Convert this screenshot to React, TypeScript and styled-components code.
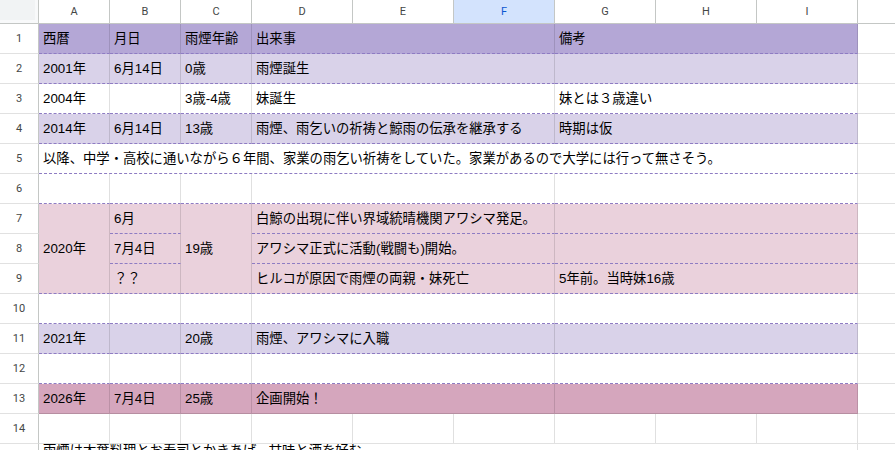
import styled, { createGlobalStyle } from 'styled-components';

const GlobalStyle = createGlobalStyle`
  html, body {
    margin: 0;
    padding: 0;
    background: #fff;
    overflow: hidden;
  }
  body {
    font-family: "Liberation Sans", "Noto Sans CJK JP", sans-serif;
  }
`;

type Line = 'dashed' | 'solid' | 'grid' | 'none';

const FILL = {
  head: '#b4a7d6',
  lilac: '#d9d2e9',
  pink: '#ead1dc',
  rose: '#d5a6bd',
  white: '#ffffff',
};

const Sheet = styled.div`
  display: grid;
  grid-template-columns: 39px 71px 71px 71px repeat(6, 101px) 120px;
  grid-template-rows: 24px repeat(14, 30px) 21px;
  width: 895px;
  height: 450px;
  overflow: hidden;
`;

const Corner = styled.div`
  background: #f1f3f4;
  border-right: 1px solid #c4c7c5;
  border-bottom: 1px solid #c4c7c5;
  box-shadow: inset -3px -3px 0 #f8f9fa;
`;

const ColHeader = styled.div<{ $selected?: boolean }>`
  display: flex;
  align-items: center;
  justify-content: center;
  background: ${(p) => (p.$selected ? '#d3e3fd' : '#ffffff')};
  color: ${(p) => (p.$selected ? '#0b57d0' : '#444746')};
  font-family: Roboto, "Liberation Sans", sans-serif;
  font-size: 11px;
  border-right: 1px solid #c4c7c5;
  border-bottom: 1px solid #c4c7c5;
  box-sizing: border-box;
`;

const RowHeader = styled.div<{ $row: number }>`
  grid-column: 1;
  grid-row: ${(p) => p.$row};
  display: flex;
  align-items: center;
  justify-content: center;
  background: #fff;
  color: #444746;
  font-family: Roboto, "Liberation Sans", sans-serif;
  font-size: 11px;
  border-right: 1px solid #c4c7c5;
  border-bottom: 1px solid #e1e1e1;
  box-sizing: border-box;
`;

const lineStyle = (line: Line) => {
  if (line === 'dashed') return '1px dashed #8e7cc3';
  if (line === 'solid') return '1px solid rgba(0, 0, 0, 0.14)';
  if (line === 'grid') return '1px solid #e1e1e1';
  return '0';
};

const Cell = styled.div<{
  $col: number;
  $span?: number;
  $row: number;
  $rows?: number;
  $fill: string;
  $bottom: Line;
  $top?: boolean;
}>`
  grid-column: ${(p) => p.$col} / span ${(p) => p.$span ?? 1};
  grid-row: ${(p) => p.$row} / span ${(p) => p.$rows ?? 1};
  display: flex;
  align-items: ${(p) => (p.$top ? 'flex-start' : 'center')};
  padding: 0 4px;
  background: ${(p) => p.$fill};
  color: #000;
  font-size: 13.33px;
  line-height: ${(p) => (p.$top ? '14px' : '17px')};
  white-space: nowrap;
  overflow: hidden;
  box-sizing: border-box;
  border-right: 1px solid rgba(0, 0, 0, 0.12);
  border-bottom: ${(p) => lineStyle(p.$bottom)};
`;

type CellDef = { c: number; span?: number; rows?: number; text?: string };
type RowDef = { fill: string; bottom: Line; cells: CellDef[]; top?: boolean };

const frame = (texts: string[]): CellDef[] => [
  { c: 1, text: texts[0] },
  { c: 2, text: texts[1] },
  { c: 3, text: texts[2] },
  { c: 4, span: 3, text: texts[3] },
  { c: 7, span: 3, text: texts[4] },
];

const ROWS: RowDef[] = [
  { fill: FILL.head, bottom: 'dashed', cells: frame(['西暦', '月日', '雨煙年齢', '出来事', '備考']) },
  { fill: FILL.lilac, bottom: 'dashed', cells: frame(['2001年', '6月14日', '0歳', '雨煙誕生', '']) },
  { fill: FILL.white, bottom: 'dashed', cells: frame(['2004年', '', '3歳-4歳', '妹誕生', '妹とは３歳違い']) },
  {
    fill: FILL.lilac,
    bottom: 'dashed',
    cells: frame(['2014年', '6月14日', '13歳', '雨煙、雨乞いの祈祷と鯨雨の伝承を継承する', '時期は仮']),
  },
  {
    fill: FILL.white,
    bottom: 'dashed',
    cells: [
      {
        c: 1,
        span: 9,
        text: '以降、中学・高校に通いながら６年間、家業の雨乞い祈祷をしていた。家業があるので大学には行って無さそう。',
      },
    ],
  },
  { fill: FILL.white, bottom: 'dashed', cells: frame(['', '', '', '', '']) },
  {
    fill: FILL.pink,
    bottom: 'dashed',
    cells: [
      { c: 1, rows: 3, text: '2020年' },
      { c: 2, text: '6月' },
      { c: 3, rows: 3, text: '19歳' },
      { c: 4, span: 3, text: '白鯨の出現に伴い界域統晴機関アワシマ発足。' },
      { c: 7, span: 3, text: '' },
    ],
  },
  {
    fill: FILL.pink,
    bottom: 'dashed',
    cells: [
      { c: 2, text: '7月4日' },
      { c: 4, span: 3, text: 'アワシマ正式に活動(戦闘も)開始。' },
      { c: 7, span: 3, text: '' },
    ],
  },
  {
    fill: FILL.pink,
    bottom: 'dashed',
    cells: [
      { c: 2, text: '？？' },
      { c: 4, span: 3, text: 'ヒルコが原因で雨煙の両親・妹死亡' },
      { c: 7, span: 3, text: '5年前。当時妹16歳' },
    ],
  },
  { fill: FILL.white, bottom: 'dashed', cells: frame(['', '', '', '', '']) },
  { fill: FILL.lilac, bottom: 'dashed', cells: frame(['2021年', '', '20歳', '雨煙、アワシマに入職', '']) },
  { fill: FILL.white, bottom: 'dashed', cells: frame(['', '', '', '', '']) },
  { fill: FILL.rose, bottom: 'solid', cells: frame(['2026年', '7月4日', '25歳', '企画開始！', '']) },
  {
    fill: FILL.white,
    bottom: 'grid',
    cells: [1, 2, 3, 4, 5, 6, 7, 8, 9].map((c) => ({ c })),
  },
  {
    fill: FILL.white,
    bottom: 'none',
    top: true,
    cells: [{ c: 1, span: 9, text: '雨煙は大葉料理とお寿司とかきあげ、甘味と酒を好む' }],
  },
];

const LETTERS = ['A', 'B', 'C', 'D', 'E', 'F', 'G', 'H', 'I', ''];

function RowGroup({ row, index }: { row: RowDef; index: number }) {
  const gridRow = index + 2;
  return (
    <>
      <RowHeader $row={gridRow}>{index + 1}</RowHeader>
      {row.cells.map((cell) => (
        <Cell
          key={cell.c}
          $col={cell.c + 1}
          $span={cell.span}
          $row={gridRow}
          $rows={cell.rows}
          $fill={row.fill}
          $bottom={row.bottom}
          $top={row.top}
        >
          {cell.text}
        </Cell>
      ))}
      <Cell $col={11} $row={gridRow} $fill={FILL.white} $bottom={row.top ? 'none' : 'grid'} />
    </>
  );
}

export default function App() {
  return (
    <>
      <GlobalStyle />
      <Sheet>
        <Corner />
        {LETTERS.map((letter, i) => (
          <ColHeader key={i} $selected={letter === 'F'}>
            {letter}
          </ColHeader>
        ))}
        {ROWS.map((row, r) => (
          <RowGroup key={r} row={row} index={r} />
        ))}
      </Sheet>
    </>
  );
}
